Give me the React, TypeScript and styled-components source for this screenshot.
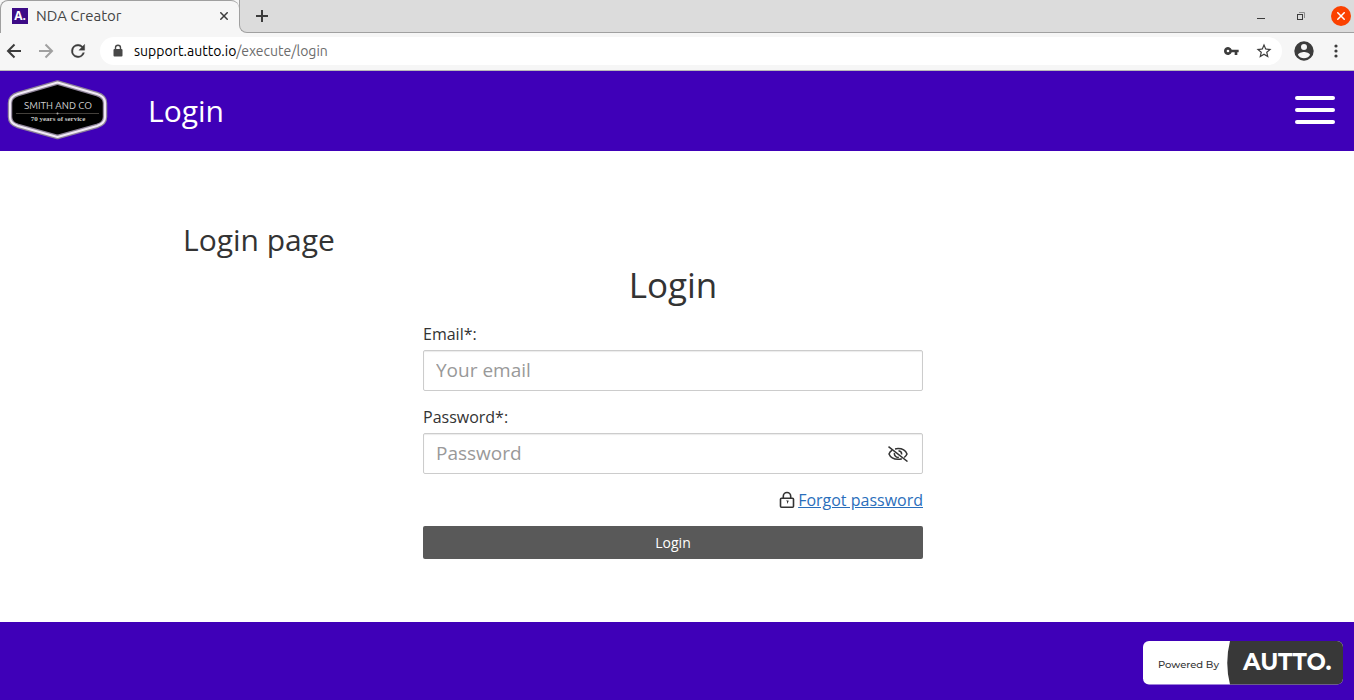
import React, { useState } from "react";
import styled, { createGlobalStyle } from "styled-components";

const GlobalStyle = createGlobalStyle`
  *, *::before, *::after { box-sizing: border-box; }
  body {
    margin: 0;
    background: #fff;
    color: #333;
    font-family: "Open Sans", "Liberation Sans", sans-serif;
  }
  button, input { font-family: inherit; }
`;

const Page = styled.div`
  display: flex;
  flex-direction: column;
  min-height: 100vh;
`;

/* Browser chrome */

const Browser = styled.div`
  font-family: Ubuntu, "Noto Sans", sans-serif;
  background: #f6f6f6;
  border-bottom: 1px solid #b9b9b9;
`;

const TabStrip = styled.div`
  display: flex;
  height: 33px;
  background: #f6f6f6;
`;

const Tab = styled.div`
  display: flex;
  align-items: center;
  width: 239px;
  padding: 0 8px 2px 11px;
  background: #f6f6f6;
  border: 1px solid #a0a0a0;
  border-bottom: 0;
  border-right: 0;
  border-radius: 8px 8px 0 0;
`;

const Favicon = styled.span`
  display: flex;
  align-items: center;
  justify-content: center;
  width: 16px;
  height: 16px;
  margin-right: 8px;
  background: #3d0c87;
  color: #fff;
  font: 700 12px/16px "Open Sans", sans-serif;
`;

const TabTitle = styled.span`
  flex: 1;
  color: #454545;
  font-size: 15px;
  line-height: 20px;
`;

const StripRest = styled.div`
  display: flex;
  flex: 1;
  align-items: center;
  justify-content: space-between;
  padding: 0 3px 0 12px;
  background: #dcdcdc;
  border-bottom: 1px solid #a0a0a0;
  border-left: 1px solid #a0a0a0;
  border-bottom-left-radius: 8px;
`;

const IconButton = styled.button<{ $size?: number }>`
  display: flex;
  align-items: center;
  justify-content: center;
  flex: none;
  width: ${(p) => p.$size ?? 20}px;
  height: ${(p) => p.$size ?? 20}px;
  padding: 0;
  border: 0;
  background: none;
  color: #3c3c3c;
  cursor: pointer;
`;

const WindowControls = styled.div`
  display: flex;
  align-items: center;
  gap: 20px;
`;

const CloseWindow = styled(IconButton)`
  border-radius: 50%;
  background: #fb4100;
  color: #fff;
`;

const Toolbar = styled.div`
  display: flex;
  align-items: center;
  gap: 12px;
  height: 37px;
  padding: 0 8px 2px 4px;
`;

const AddressBar = styled.div`
  display: flex;
  flex: 1;
  align-items: center;
  gap: 12px;
  height: 28px;
  padding: 0 8px 0 12px;
  border-radius: 14px;
  background: #fff;
`;

const Address = styled.span`
  display: flex;
  flex: 1;
  align-items: center;
  gap: 10px;
  font-size: 14px;
  line-height: 20px;
  color: #6c6c6c;

  b { color: #000; font-weight: 400; }
`;

/* Site */

const SiteHeader = styled.header`
  display: flex;
  align-items: center;
  height: 80px;
  padding: 0 19px 2px 7px;
  background: #3f00b8;
`;

const HeaderTitle = styled.div`
  flex: 1;
  margin-left: 40px;
  padding-top: 2px;
  color: #fff;
  font-size: 30px;
  line-height: 40px;
`;

const MenuButton = styled.button`
  display: flex;
  flex-direction: column;
  gap: 8px;
  width: 40px;
  padding: 0;
  border: 0;
  background: none;
  cursor: pointer;
`;

const MenuBar = styled.span`
  height: 4px;
  border-radius: 2px;
  background: #fff;
`;

const Main = styled.main`
  flex: 1;
  padding: 72px 16px 63px 8px;
`;

const Content = styled.div`
  max-width: 980px;
  margin: 0 auto;
`;

const PageTitle = styled.h2`
  margin: 0 0 8px;
  font-size: 30px;
  font-weight: 400;
  line-height: 33px;
`;

const Form = styled.form`
  display: flex;
  flex-direction: column;
  max-width: 500px;
  margin: 0 auto;
`;

const FormTitle = styled.h1`
  margin: 0 0 16px;
  font-size: 35px;
  font-weight: 400;
  line-height: 42px;
  text-align: center;
`;

const Field = styled.div`
  display: flex;
  flex-direction: column;
  gap: 4px;
  margin-bottom: 14px;
`;

const Label = styled.label`
  font-size: 16px;
  line-height: 24px;
`;

const InputBox = styled.div`
  display: flex;
  align-items: center;
  height: 41px;
  padding: 0 14px 0 12px;
  border: 1px solid #ccc;
  border-radius: 2px;
  box-shadow: inset 0 1px 1px rgba(0, 0, 0, 0.08);
`;

const Input = styled.input`
  flex: 1;
  min-width: 0;
  padding: 0 0 2px;
  border: 0;
  outline: 0;
  background: none;
  color: #333;
  font-size: 19px;
  line-height: 28px;

  &::placeholder { color: #999; opacity: 1; }
`;

const ForgotRow = styled.div`
  display: flex;
  align-items: center;
  justify-content: flex-end;
  gap: 3px;
  margin-bottom: 14px;
  font-size: 16px;
  line-height: 24px;

  a { color: #2a6ebb; text-decoration: underline; }
`;

const SubmitButton = styled.button`
  height: 33px;
  border: 0;
  border-radius: 2px;
  background: #595959;
  color: #fff;
  font-size: 14px;
  line-height: 20px;
  cursor: pointer;
`;

const SiteFooter = styled.footer`
  display: flex;
  align-items: center;
  justify-content: flex-end;
  height: 78px;
  padding: 4px 11px 0;
  background: #3f00b8;
`;

const Badge = styled.a`
  display: block;
  height: 44px;
`;

const BackIcon = () => (
  <svg width="16" height="16" viewBox="0 0 16 16" fill="none" stroke="currentColor" strokeWidth="2">
    <path d="M15 8H2.500M8.500 1.500 2 8l6.500 6.500" />
  </svg>
);

const ForwardIcon = () => (
  <svg width="16" height="16" viewBox="0 0 16 16" fill="none" stroke="#a0a0a0" strokeWidth="2">
    <path d="M1 8h12.500M7.500 1.500 14 8l-6.500 6.500" />
  </svg>
);

const ReloadIcon = () => (
  <svg width="22" height="22" viewBox="0 0 24 24" fill="currentColor" stroke="currentColor" strokeWidth=".4">
    <path d="M17.650 6.350A7.960 7.960 0 0 0 12 4a8 8 0 1 0 7.730 10h-2.080A6 6 0 1 1 12 6c1.660 0 3.140.69 4.220 1.780L13 11h7V4z" />
  </svg>
);

const PadlockIcon = () => (
  <svg width="12" height="14" viewBox="0 0 12 14">
    <path d="M3.500 5.500V3.700a2.500 2.500 0 0 1 5 0v1.800" fill="none" stroke="#484848" strokeWidth="1.400" />
    <rect x="1.500" y="5" width="9" height="7.500" rx="1" fill="#484848" />
  </svg>
);

const KeyIcon = () => (
  <svg width="16" height="16" viewBox="1 0 24 24" fill="currentColor">
    <path d="M12.650 10A6 6 0 1 0 12.650 14H17v4h4v-4h2v-4zM7 14a2 2 0 1 1 0-4 2 2 0 0 1 0 4z" />
  </svg>
);

const StarIcon = () => (
  <svg width="18" height="18" viewBox="0 0 24 24" fill="currentColor">
    <path d="m22 9.240-7.190-.62L12 2 9.190 8.630 2 9.240l5.460 4.730L5.820 21 12 17.270 18.180 21l-1.630-7.030zM12 15.400l-3.760 2.270 1-4.280-3.320-2.880 4.380-.38L12 6.100l1.710 4.040 4.380.38-3.320 2.880 1 4.280z" />
  </svg>
);

const ProfileIcon = () => (
  <svg width="20" height="20" viewBox="2 2 20 20" fill="currentColor">
    <path d="M12 2.300a9.700 9.700 0 1 0 0 19.400 9.700 9.700 0 0 0 0-19.400zm0 2.700a3 3 0 1 1 0 6 3 3 0 0 1 0-6zm0 14.200a7.200 7.200 0 0 1-6-3.220c.03-1.990 4-3.080 6-3.080s5.970 1.090 6 3.080a7.200 7.200 0 0 1-6 3.220z" />
  </svg>
);

const MoreIcon = () => (
  <svg width="4" height="14" viewBox="0 0 4 14" fill="currentColor">
    <circle cx="2" cy="2" r="1.600" />
    <circle cx="2" cy="7" r="1.600" />
    <circle cx="2" cy="12" r="1.600" />
  </svg>
);

const CrossIcon = () => (
  <svg width="8" height="8" viewBox="0 0 8 8" stroke="currentColor" strokeWidth="1.500">
    <path d="m.3.3 7.400 7.400m0-7.400L.3 7.700" />
  </svg>
);

const PlusIcon = () => (
  <svg width="12" height="12" viewBox="0 0 12 12" stroke="currentColor" strokeWidth="2">
    <path d="M6 0v12M0 6h12" />
  </svg>
);

const MinimizeIcon = () => (
  <svg width="8" height="8" viewBox="0 0 8 8" fill="currentColor">
    <rect y="6" width="8" height="1" />
  </svg>
);

const RestoreIcon = () => (
  <svg width="8" height="8" viewBox="0 0 8 8" fill="none">
    <path d="M2 .5h5.500V6" stroke="#8c8c8c" />
    <rect x=".5" y="2.500" width="5" height="5" stroke="#3c3c3c" />
  </svg>
);

const EyeOffIcon = () => (
  <svg width="20" height="16" viewBox="0 0 20 16" fill="none" stroke="#333" strokeWidth="1.500">
    <path d="M4.200 4.200C2.700 5.200 1.600 6.500 1 8c1.300 3.200 4.600 5.300 9 5.300 1.400 0 2.700-.2 3.800-.6M7 2.900c.9-.2 1.900-.3 3-.3 4.400 0 7.700 2.200 9 5.400-.6 1.400-1.500 2.600-2.800 3.500" />
    <path d="M6.500 7a3.600 3.600 0 0 0 4.300 4.300M10.500 4.700A3.500 3.500 0 0 1 13.600 8.500M.5.600l19 14.900" />
  </svg>
);

const ForgotLockIcon = () => (
  <svg width="16" height="18" viewBox="0 0 16 18" fill="none" stroke="#333" strokeWidth="1.600">
    <rect x="1.500" y="7.300" width="13" height="9" rx="1" />
    <path d="M4.300 7V5.200a3.700 3.700 0 0 1 7.400 0V7" />
    <path d="M7 9.500h2.500v1L8 13v-2.500z" fill="#333" stroke="none" />
  </svg>
);

const CompanyLogo = () => (
  <svg width="101" height="60" viewBox="0 0 101 60" role="img" aria-label="Smith and Co">
    <path d="M50.500 2.500 90 14q8 2.500 8 9v14q0 6.500-8 9L50.500 57 11 46q-8-2.500-8-9V23q0-6.500 8-9z" fill="#000" stroke="#8e8399" strokeWidth="4.500" strokeLinejoin="round" />
    <path d="M50.500 2.500 90 14q8 2.500 8 9v14q0 6.500-8 9L50.500 57 11 46q-8-2.500-8-9V23q0-6.500 8-9z" fill="none" stroke="#f1eaf5" strokeWidth="2.200" strokeLinejoin="round" />
    <text x="51" y="29" textAnchor="middle" fill="#d0d0d0" fontFamily="Ubuntu, Roboto, sans-serif" fontSize="10">SMITH AND CO</text>
    <path d="M9 33.500h83" stroke="#55504a" strokeWidth=".8" />
    <circle cx="50.500" cy="33.500" r="1" fill="#aaa" />
    <text x="51" y="41" textAnchor="middle" fill="#c8c8c8" fontFamily="Liberation Serif, serif" fontSize="7" fontWeight="700">70 years of service</text>
  </svg>
);

const PoweredByLogo = () => (
  <svg width="200" height="44" viewBox="0 0 200 44" role="img" aria-label="Powered by Autto">
    <rect width="200" height="43.500" rx="6" fill="#fff" />
    <path d="M87 0h107a6 6 0 0 1 6 6v31.500a6 6 0 0 1-6 6H87Q81.500 22 87 0z" fill="#383838" />
    <text x="15" y="27" fill="#333" fontFamily="Montserrat, Inter, sans-serif" fontSize="10" fontWeight="500">Powered By</text>
    <text x="100" y="29" fill="#fff" fontFamily="Montserrat, Inter, sans-serif" fontSize="23" fontWeight="700">AUTTO.</text>
  </svg>
);

export default function App() {
  const [visible, setVisible] = useState(false);

  return (
    <Page>
      <GlobalStyle />
      <Browser>
        <TabStrip>
          <Tab>
            <Favicon>A.</Favicon>
            <TabTitle>NDA Creator</TabTitle>
            <IconButton $size={14} aria-label="Close tab"><CrossIcon /></IconButton>
          </Tab>
          <StripRest>
            <IconButton aria-label="New tab"><PlusIcon /></IconButton>
            <WindowControls>
              <IconButton aria-label="Minimize"><MinimizeIcon /></IconButton>
              <IconButton aria-label="Restore"><RestoreIcon /></IconButton>
              <CloseWindow aria-label="Close window"><CrossIcon /></CloseWindow>
            </WindowControls>
          </StripRest>
        </TabStrip>
        <Toolbar>
          <IconButton aria-label="Back"><BackIcon /></IconButton>
          <IconButton aria-label="Forward"><ForwardIcon /></IconButton>
          <IconButton aria-label="Reload"><ReloadIcon /></IconButton>
          <AddressBar>
            <Address>
              <PadlockIcon />
              <span><b>support.autto.io</b>/execute/login</span>
            </Address>
            <IconButton aria-label="Saved passwords"><KeyIcon /></IconButton>
            <IconButton aria-label="Bookmark"><StarIcon /></IconButton>
          </AddressBar>
          <IconButton aria-label="Profile"><ProfileIcon /></IconButton>
          <IconButton aria-label="More"><MoreIcon /></IconButton>
        </Toolbar>
      </Browser>

      <SiteHeader>
        <CompanyLogo />
        <HeaderTitle>Login</HeaderTitle>
        <MenuButton aria-label="Menu">
          <MenuBar />
          <MenuBar />
          <MenuBar />
        </MenuButton>
      </SiteHeader>

      <Main>
        <Content>
          <PageTitle>Login page</PageTitle>
          <Form onSubmit={(e: React.FormEvent) => e.preventDefault()}>
            <FormTitle>Login</FormTitle>
            <Field>
              <Label htmlFor="email">Email*:</Label>
              <InputBox>
                <Input id="email" type="email" placeholder="Your email" />
              </InputBox>
            </Field>
            <Field>
              <Label htmlFor="password">Password*:</Label>
              <InputBox>
                <Input id="password" type={visible ? "text" : "password"} placeholder="Password" />
                <IconButton type="button" aria-label="Show password" onClick={() => setVisible(!visible)}>
                  <EyeOffIcon />
                </IconButton>
              </InputBox>
            </Field>
            <ForgotRow>
              <ForgotLockIcon />
              <a href="#forgot">Forgot password</a>
            </ForgotRow>
            <SubmitButton type="submit">Login</SubmitButton>
          </Form>
        </Content>
      </Main>

      <SiteFooter>
        <Badge href="#autto"><PoweredByLogo /></Badge>
      </SiteFooter>
    </Page>
  );
}
